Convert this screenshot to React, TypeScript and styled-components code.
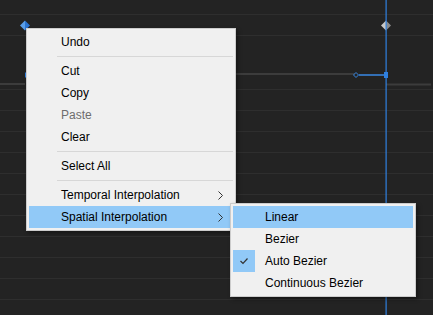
import React from "react";
import styled, { createGlobalStyle } from "styled-components";

const GlobalStyle = createGlobalStyle`
  html, body { margin: 0; padding: 0; background: #232323; }
  body { font-family: "Liberation Sans", Arial, sans-serif; }
`;

const Panel = styled.div`
  position: relative;
  width: 433px;
  height: 315px;
  overflow: hidden;
  background: #232323;
  display: flex;
  flex-direction: column;
`;

const TrackRow = styled.div<{ $h: number }>`
  flex: none;
  height: ${(p) => p.$h}px;
  border-bottom: 1px solid #2e2e2e;
`;

const GraphLayer = styled.svg`
  position: absolute;
  left: 0;
  top: 0;
  pointer-events: none;
`;

const Menu = styled.div<{ $left?: number; $top?: number; $width: number }>`
  position: absolute;
  left: ${(p) => (p.$left !== undefined ? `${p.$left}px` : "auto")};
  top: ${(p) => (p.$top !== undefined ? `${p.$top}px` : "auto")};
  width: ${(p) => p.$width}px;
  box-sizing: border-box;
  padding: 2px;
  background: #f0f0f0;
  border: 1px solid #cccccc;
  box-shadow: 2px 2px 4px rgba(0, 0, 0, 0.4);
  display: flex;
  flex-direction: column;
  font-family: "Liberation Sans", Arial, sans-serif;
  font-size: 12px;
  color: #000;
  z-index: 2;
`;

const SubMenu = styled(Menu)`
  left: calc(100% - 3px);
  top: -3px;
  z-index: 3;
`;

const Item = styled.div<{ $active?: boolean; $disabled?: boolean }>`
  position: relative;
  height: 22px;
  display: flex;
  align-items: center;
  background: ${(p) => (p.$active ? "#91c9f7" : "transparent")};
  color: ${(p) => (p.$disabled ? "#6d6d6d" : "#000")};
  white-space: nowrap;
`;

const IconCell = styled.div<{ $checked?: boolean }>`
  flex: none;
  width: 22px;
  height: 22px;
  display: flex;
  align-items: center;
  justify-content: center;
  background: ${(p) => (p.$checked ? "#91c9f7" : "transparent")};
`;

const Label = styled.span`
  flex: 1;
  margin-left: 10px;
  line-height: 22px;
`;

const Chevron = styled.svg`
  flex: none;
  margin-right: 10px;
`;

const Separator = styled.div`
  height: 1px;
  margin: 3px 0 3px 28px;
  background: #d7d7d7;
`;

const Arrow = () => (
  <Chevron width="5" height="9" viewBox="0 0 5 9">
    <polyline points="0.5,0.5 4.5,4.5 0.5,8.5" fill="none" stroke="#333" strokeWidth="1" />
  </Chevron>
);

const Check = () => (
  <svg width="22" height="22" viewBox="0 0 22 22">
    <polyline points="7.5,11 10,13.5 14.5,8.5" fill="none" stroke="#333" strokeWidth="1.2" />
  </svg>
);

const rows = [14, 20, 53, 20, 20, 20, 20, 20, 20, 20, 20, 20, 20, 20, 20];

const Graph = () => (
  <GraphLayer width="433" height="315" viewBox="0 0 433 315">
    {/* value curve */}
    <rect x="0" y="83" width="25" height="2" fill="#3c3c3c" />
    <rect x="25" y="73" width="330" height="2" fill="#3c3c3c" />
    <rect x="25" y="72.5" width="5" height="5" fill="#2f80e0" />
    <line x1="359" y1="75" x2="386" y2="75" stroke="#3a8ae6" strokeWidth="1.5" />
    <polygon points="356,72.5 358.5,75 356,77.5 353.5,75" fill="#232323" stroke="#3a8ae6" strokeWidth="1" />
    <rect x="386" y="83.5" width="45" height="2" fill="#3c3c3c" />
    {/* keyframes */}
    <polygon points="20,25.5 25,20.5 25,30.5" fill="#5a9ee8" />
    <polygon points="25,20.5 30,25.5 25,30.5" fill="#2b74d0" />
    <polygon points="381,25.5 386,20.5 386,30.5" fill="#c8c8c8" />
    <polygon points="386,20.5 391,25.5 386,30.5" fill="#8a8a8a" />
    {/* playhead */}
    <rect x="385.5" y="0" width="1.2" height="315" fill="#2f80e0" />
    <rect x="384" y="72" width="4" height="6" fill="#2f80e0" />
  </GraphLayer>
);

export default function App() {
  return (
    <>
      <GlobalStyle />
      <Panel>
        {rows.map((h, i) => (
          <TrackRow key={i} $h={h} />
        ))}
        <Graph />
        <Menu $left={26} $top={28} $width={210}>
          <Item>
            <IconCell />
            <Label>Undo</Label>
          </Item>
          <Separator />
          <Item>
            <IconCell />
            <Label>Cut</Label>
          </Item>
          <Item>
            <IconCell />
            <Label>Copy</Label>
          </Item>
          <Item $disabled>
            <IconCell />
            <Label>Paste</Label>
          </Item>
          <Item>
            <IconCell />
            <Label>Clear</Label>
          </Item>
          <Separator />
          <Item>
            <IconCell />
            <Label>Select All</Label>
          </Item>
          <Separator />
          <Item>
            <IconCell />
            <Label>Temporal Interpolation</Label>
            <Arrow />
          </Item>
          <Item $active>
            <IconCell />
            <Label>Spatial Interpolation</Label>
            <Arrow />
            <SubMenu $width={186}>
              <Item $active>
                <IconCell />
                <Label>Linear</Label>
              </Item>
              <Item>
                <IconCell />
                <Label>Bezier</Label>
              </Item>
              <Item>
                <IconCell $checked>
                  <Check />
                </IconCell>
                <Label>Auto Bezier</Label>
              </Item>
              <Item>
                <IconCell />
                <Label>Continuous Bezier</Label>
              </Item>
            </SubMenu>
          </Item>
        </Menu>
      </Panel>
    </>
  );
}
